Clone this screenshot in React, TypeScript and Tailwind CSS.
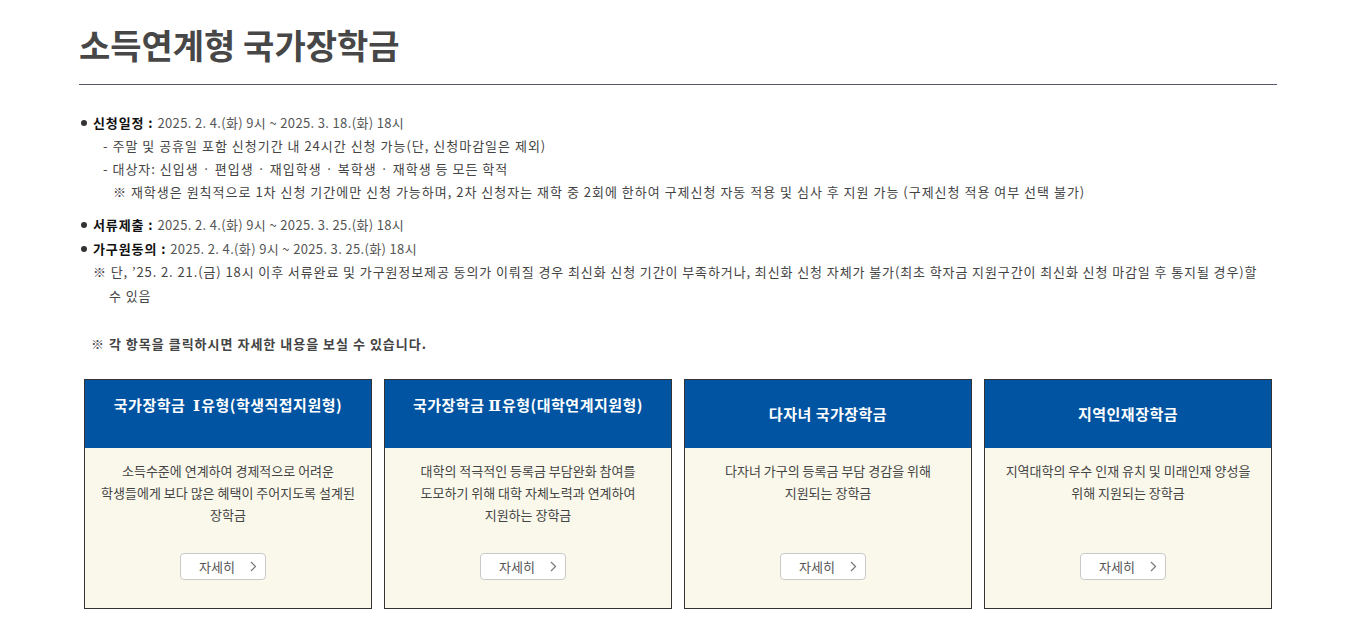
import React from "react";

const font = "font-['Malgun_Gothic','Noto_Sans_CJK_KR','Noto_Sans',sans-serif]";

function Bullet({ label, text }: { label: string; text: string }) {
  return (
    <div className="flex items-center h-[23px] whitespace-nowrap">
      <span className="w-[6px] h-[6px] rounded-full bg-[#333] ml-[2px] mr-[6px]" />
      <span className="font-bold text-[#111] tracking-[0.9px]">{label} :</span>
      <span className="ml-[4px] text-[#555] tracking-[0.35px]">{text}</span>
    </div>
  );
}

const cards = [
  {
    pre: "국가장학금  ",
    num: "Ⅰ",
    post: "유형(학생직접지원형)",
    high: true,
    body: ["소득수준에 연계하여 경제적으로 어려운", "학생들에게 보다 많은 혜택이 주어지도록 설계된", "장학금"],
  },
  {
    pre: "국가장학금 ",
    num: "Ⅱ",
    post: "유형(대학연계지원형)",
    high: true,
    body: ["대학의 적극적인 등록금 부담완화 참여를", "도모하기 위해 대학 자체노력과 연계하여", "지원하는 장학금"],
  },
  {
    pre: "다자녀 국가장학금",
    num: "",
    post: "",
    high: false,
    body: ["다자녀 가구의 등록금 부담 경감을 위해", "지원되는 장학금"],
  },
  {
    pre: "지역인재장학금",
    num: "",
    post: "",
    high: false,
    body: ["지역대학의 우수 인재 유치 및 미래인재 양성을", "위해 지원되는 장학금"],
  },
];

export default function App() {
  return (
    <div className={`w-[1364px] min-h-[628px] bg-white ${font}`}>
      <div className="ml-[79px] w-[1198px]">
        <h1 className="pt-[22px] pb-[16px] text-[34px] leading-[46px] font-bold text-[#474747] border-b border-[#56566a]">
          소득연계형 국가장학금
        </h1>

        <div className="mt-[26px] text-[13px] leading-[23px] tracking-[1px]">
          <Bullet label="신청일정" text="2025. 2. 4.(화) 9시 ~ 2025. 3. 18.(화) 18시" />
          <div className="pl-[24px] text-[#444] whitespace-nowrap">- 주말 및 공휴일 포함 신청기간 내 24시간 신청 가능(단, 신청마감일은 제외)</div>
          <div className="pl-[24px] text-[#444] whitespace-nowrap">- 대상자: 신입생 · 편입생 · 재입학생 · 복학생 · 재학생 등 모든 학적</div>
          <div className="pl-[34px] text-[#444] whitespace-nowrap">
            ※ 재학생은 원칙적으로 1차 신청 기간에만 신청 가능하며, 2차 신청자는 재학 중 2회에 한하여 구제신청 자동 적용 및 심사 후 지원 가능 (구제신청 적용 여부 선택 불가)
          </div>

          <div className="mt-[10px]">
            <Bullet label="서류제출" text="2025. 2. 4.(화) 9시 ~ 2025. 3. 25.(화) 18시" />
            <div className="mt-[1px]">
              <Bullet label="가구원동의" text="2025. 2. 4.(화) 9시 ~ 2025. 3. 25.(화) 18시" />
            </div>
            <div className="pl-[14px] text-[#444] leading-[24px] whitespace-nowrap tracking-[0.9px]">
              <div>
                ※ 단, ’25. 2. 21.(금) 18시 이후 서류완료 및 가구원정보제공 동의가 이뤄질 경우 최신화 신청 기간이 부족하거나, 최신화 신청 자체가 불가(최초 학자금 지원구간이 최신화 신청 마감일 후 통지될 경우)할
              </div>
              <div className="pl-[16px]">수 있음</div>
            </div>
          </div>

          <div className="mt-[24px] pl-[12px] font-bold text-[#444] leading-[24px] tracking-[1px]">
            ※ 각 항목을 클릭하시면 자세한 내용을 보실 수 있습니다.
          </div>
        </div>

        <div className="mt-[23px] ml-[5px] grid grid-cols-[repeat(4,288px)] gap-x-[12px]">
          {cards.map((c) => (
            <div key={c.pre} className="h-[230px] border border-[#333] flex flex-col bg-[#faf8eb]">
              <div className={`h-[68px] bg-[#0054a2] text-white text-center text-[15px] font-bold leading-[20px] tracking-[0.5px] whitespace-pre ${c.high ? "pt-[15px]" : "pt-[24px]"}`}>
                {c.pre}
                {c.num && <span className="font-['DejaVu_Serif','Liberation_Serif',serif] tracking-[1px]">{c.num}</span>}
                {c.post}
              </div>
              <div className="flex-1 flex flex-col">
                <div className="pt-[12px] text-center text-[13px] leading-[22px] text-[#444]">
                  {c.body.map((l) => (
                    <div key={l}>{l}</div>
                  ))}
                </div>
                <button className="mt-auto mb-[28px] ml-[95px] w-[86px] h-[27px] bg-white border border-[#c9c9c9] rounded-[4px] flex items-center text-[13px] text-[#555]">
                  <span className="ml-[18px]">자세히</span>
                  <svg className="ml-[15px]" width="7" height="11" viewBox="0 0 7 11" fill="none">
                    <path d="M1 1l4.5 4.5L1 10" stroke="#777" strokeWidth="1.2" />
                  </svg>
                </button>
              </div>
            </div>
          ))}
        </div>
      </div>
    </div>
  );
}
